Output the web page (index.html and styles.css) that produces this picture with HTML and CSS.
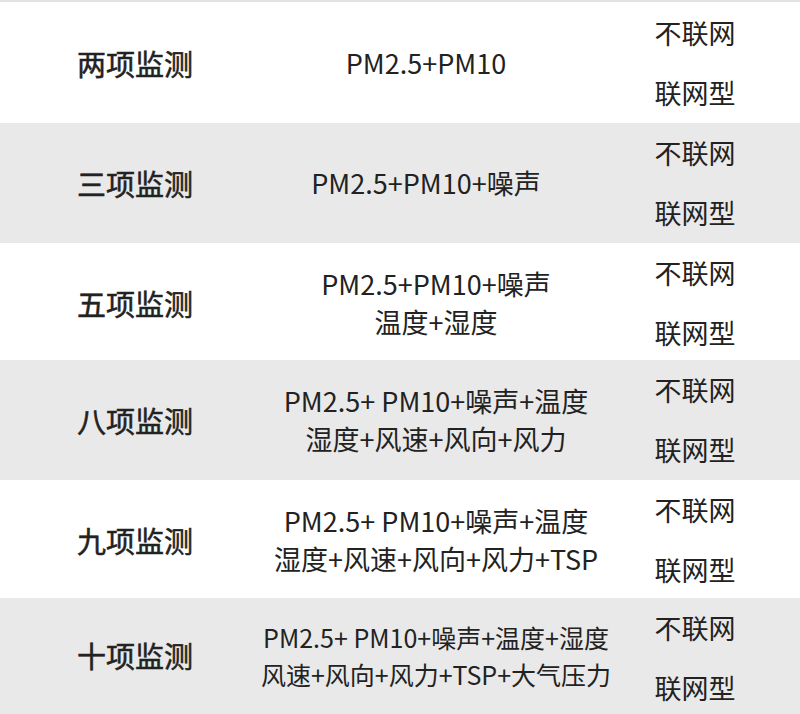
FILE: index.html
```html
<!DOCTYPE html>
<html lang="zh-CN">
<head>
<meta charset="utf-8">
<link rel="stylesheet" href="styles.css">
</head>
<body>
<div class="table">
  <div class="row white r1">
    <div class="name">两项监测</div>
    <div class="items"><span>PM2.5+PM10</span></div>
    <div class="types"><span>不联网</span><span>联网型</span></div>
  </div>
  <div class="row gray r2">
    <div class="name">三项监测</div>
    <div class="items"><span>PM2.5+PM10+噪声</span></div>
    <div class="types"><span>不联网</span><span>联网型</span></div>
  </div>
  <div class="row white r3">
    <div class="name">五项监测</div>
    <div class="items shifted"><span>PM2.5+PM10+噪声</span><span>温度+湿度</span></div>
    <div class="types"><span>不联网</span><span>联网型</span></div>
  </div>
  <div class="row gray r4">
    <div class="name">八项监测</div>
    <div class="items shifted"><span>PM2.5+ PM10+噪声+温度</span><span>湿度+风速+风向+风力</span></div>
    <div class="types"><span>不联网</span><span>联网型</span></div>
  </div>
  <div class="row white r5">
    <div class="name">九项监测</div>
    <div class="items shifted"><span>PM2.5+ PM10+噪声+温度</span><span>湿度+风速+风向+风力+TSP</span></div>
    <div class="types"><span>不联网</span><span>联网型</span></div>
  </div>
  <div class="row gray r6">
    <div class="name">十项监测</div>
    <div class="items shifted small"><span>PM2.5+ PM10+噪声+温度+湿度</span><span>风速+风向+风力+TSP+大气压力</span></div>
    <div class="types"><span>不联网</span><span>联网型</span></div>
  </div>
</div>
</body>
</html>
```

FILE: styles.css
```css
html, body {
  margin: 0;
  padding: 0;
  background: #ffffff;
  width: 800px;
  height: 714px;
  overflow: hidden;
}
body {
  font-family: "Noto Sans CJK SC", "Noto Sans", sans-serif;
  color: #222222;
}
.table {
  border-top: 2px solid #e2e2e2;
  width: 800px;
}
.row {
  display: grid;
  grid-template-columns: 270px 312px 226px;
  align-items: center;
}
.white { background: #ffffff; }
.gray { background: #e9e9e9; }
.r1 { height: 121px; }
.r2 { height: 120px; }
.r3 { height: 117px; }
.r4 { height: 120px; }
.r5 { height: 118px; }
.r6 { height: 120px; }
.name {
  text-align: center;
  font-size: 29px;
  font-weight: 400;
  -webkit-text-stroke: 0.5px #222222;
}
.items {
  display: flex;
  flex-direction: column;
  align-items: center;
  font-size: 27px;
  line-height: 38px;
  white-space: nowrap;
}
.items.shifted {
  padding-left: 20px;
}
.items.small {
  font-size: 25px;
  line-height: 37px;
  padding-bottom: 4px;
}
.r6 .name {
  padding-bottom: 6px;
}
.types {
  display: flex;
  flex-direction: column;
  align-items: center;
  font-size: 27px;
}
.types span {
  height: 60px;
  line-height: 60px;
}
```
